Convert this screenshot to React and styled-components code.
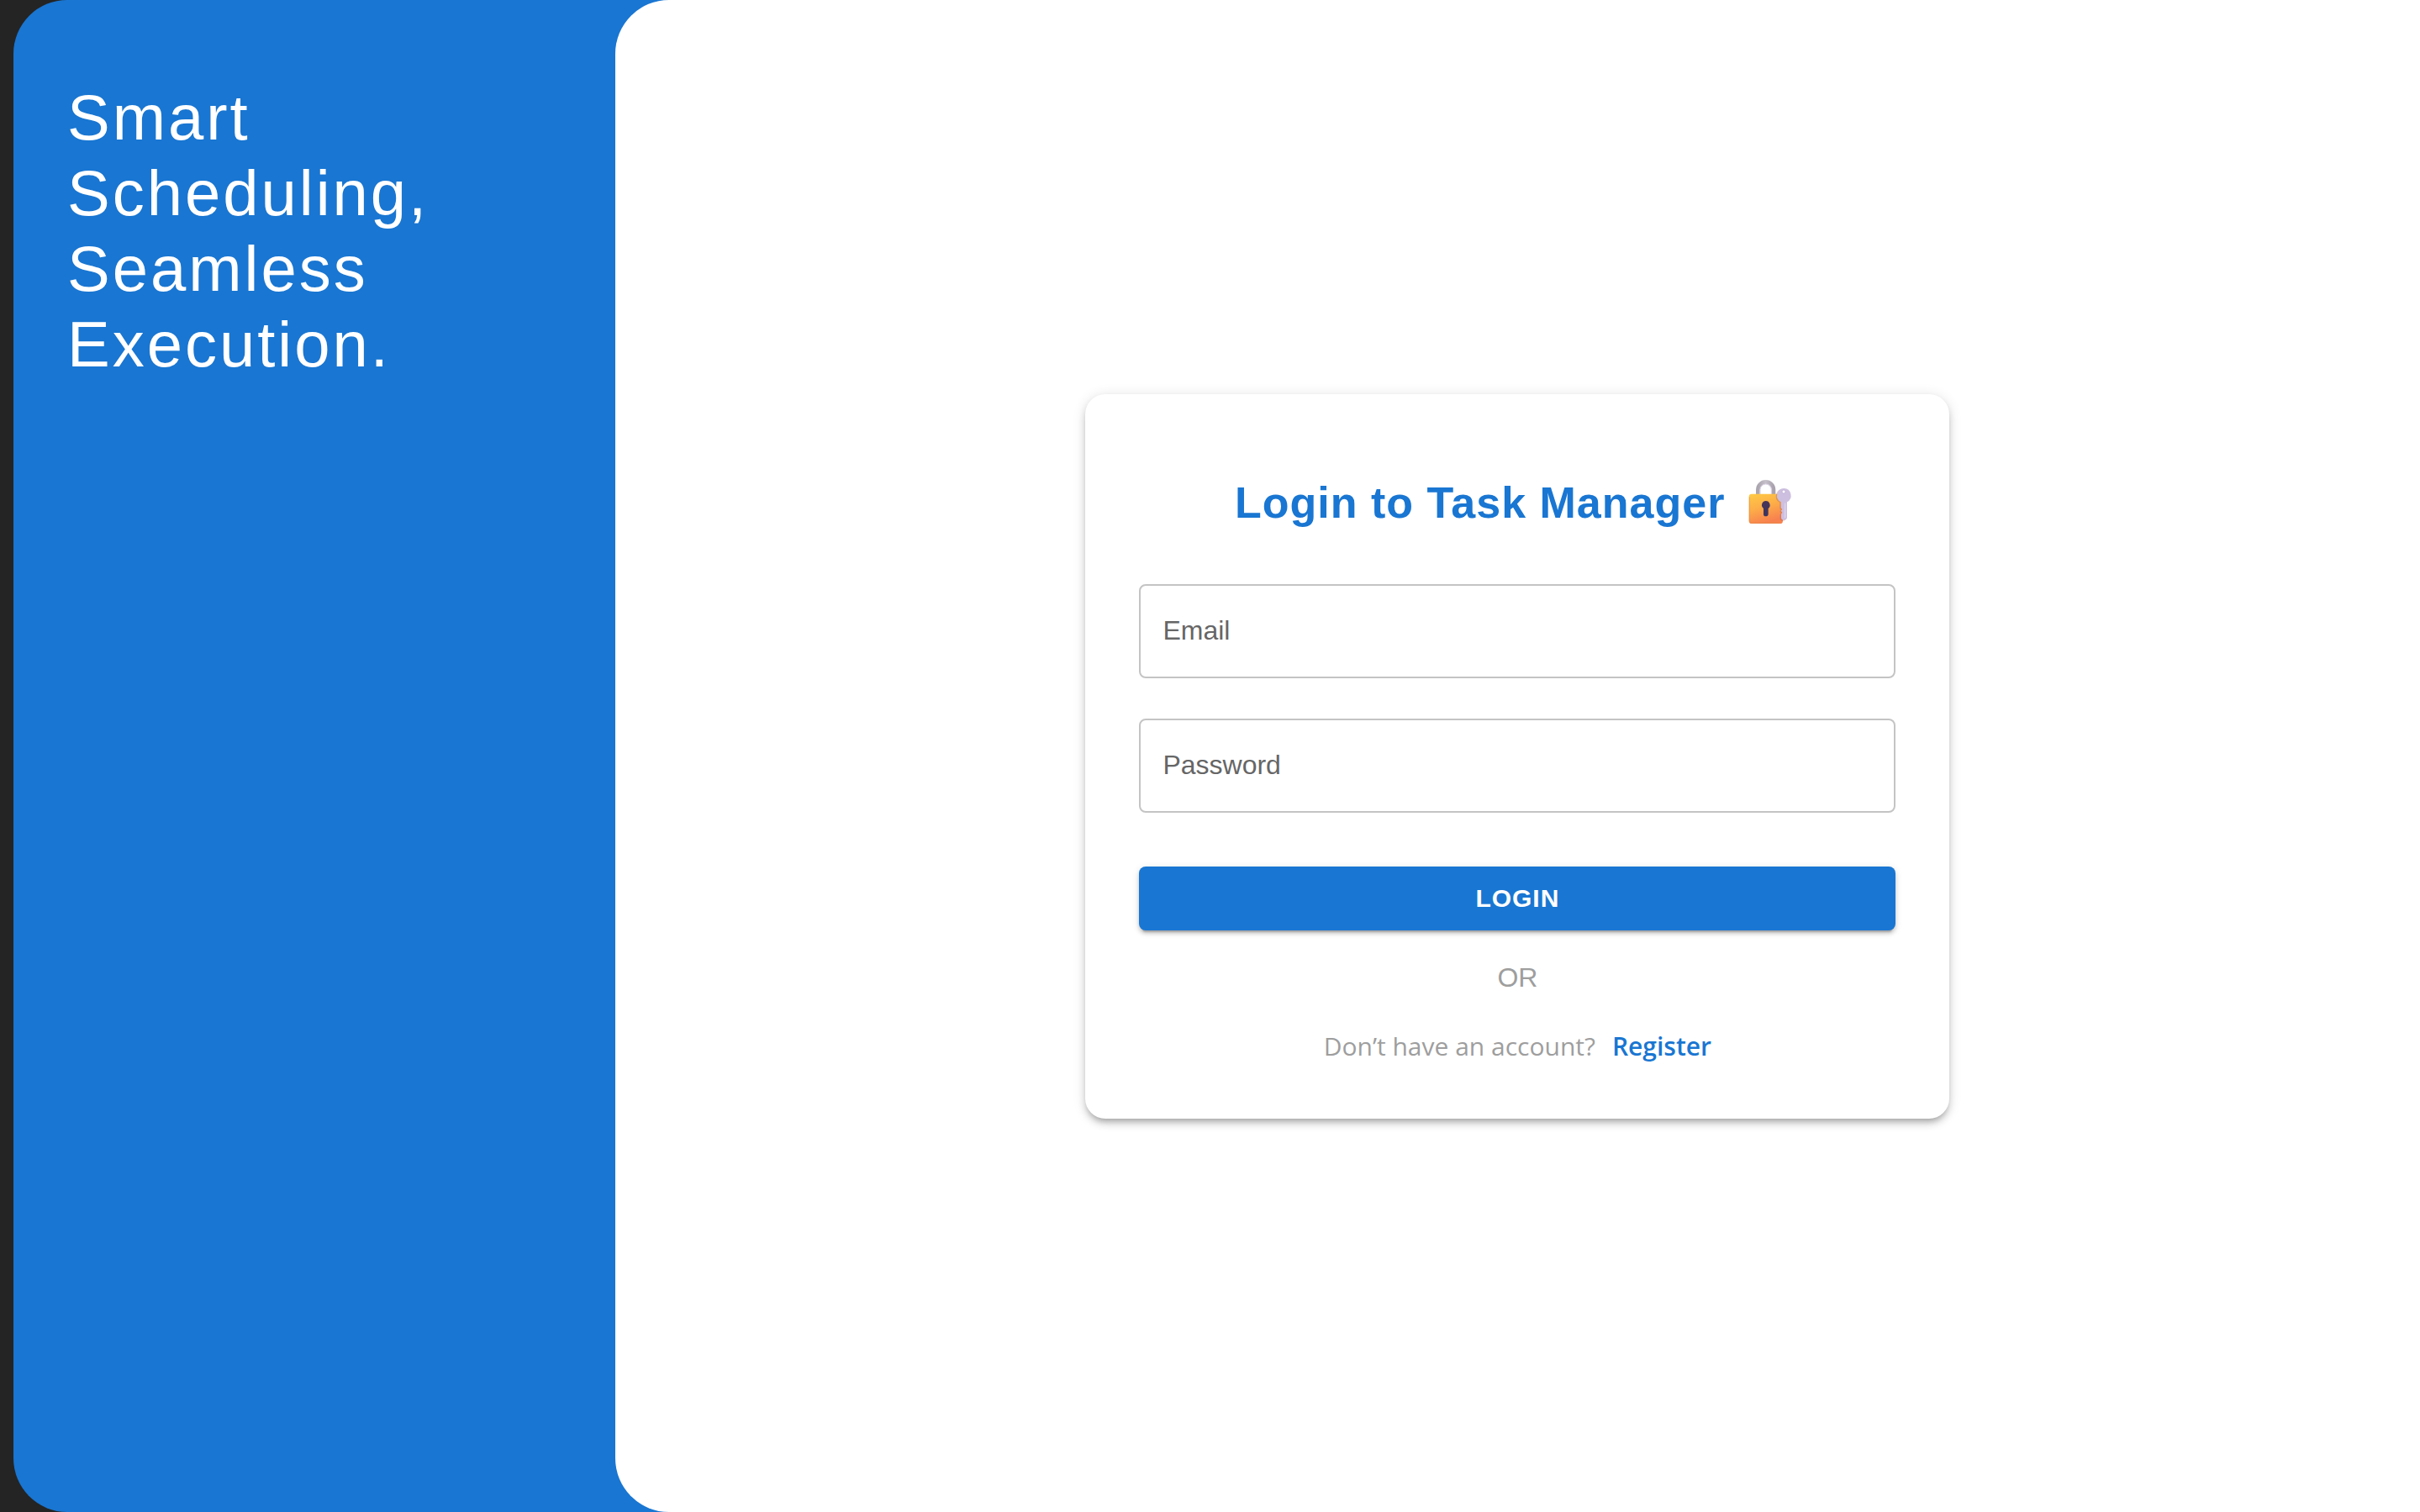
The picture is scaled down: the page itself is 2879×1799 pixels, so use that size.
import React from "react";
import styled, { createGlobalStyle } from "styled-components";

const GlobalStyle = createGlobalStyle`
  *, *::before, *::after {
    box-sizing: border-box;
  }
  body {
    margin: 0;
    background: #242424;
    font-family: "Liberation Sans", Arial, Helvetica, sans-serif;
  }
`;

const Shell = styled.div`
  display: flex;
  min-height: 100vh;
  margin-left: 16px;
  background: #1976d2;
  border-radius: 64px 0 0 64px;
  overflow: hidden;
`;

const Brand = styled.aside`
  flex: 0 0 25%;
  padding: 95px 64px;
`;

const Tagline = styled.h1`
  margin: 0;
  color: #fff;
  font-size: 76px;
  font-weight: 400;
  line-height: 90px;
  letter-spacing: 3px;
`;

const Content = styled.main`
  flex: 1;
  display: flex;
  align-items: center;
  justify-content: center;
  background: #fff;
  border-radius: 64px 0 0 64px;
`;

const Card = styled.form`
  display: flex;
  flex-direction: column;
  width: 100%;
  max-width: 1028px;
  padding: 96px 64px 60px;
  background: #fff;
  border-radius: 24px;
  box-shadow:
    0 6px 6px -4px rgba(0, 0, 0, 0.2),
    0 6px 8px 0 rgba(0, 0, 0, 0.14),
    0 2px 16px 0 rgba(0, 0, 0, 0.12);
`;

const Title = styled.h2`
  margin: 0 0 64px;
  color: #1976d2;
  font-size: 52px;
  font-weight: 700;
  line-height: 66px;
  letter-spacing: 1px;
  text-align: center;
`;

const LockIcon = styled.svg`
  width: 74px;
  height: 54px;
  vertical-align: -8px;
`;

const Fields = styled.div`
  display: flex;
  flex-direction: column;
  gap: 48px;
  margin-bottom: 64px;
`;

const Field = styled.div`
  display: grid;
  align-items: center;

  > * {
    grid-area: 1 / 1;
  }
`;

const FieldLabel = styled.label`
  justify-self: start;
  padding: 0 28px 2px;
  color: #666;
  font-size: 32px;
  line-height: 46px;
  pointer-events: none;
  z-index: 1;

  &:has(+ input:focus),
  &:has(+ input:not(:placeholder-shown)) {
    visibility: hidden;
  }
`;

const FieldInput = styled.input`
  width: 100%;
  height: 112px;
  padding: 0 28px;
  border: 2px solid #c4c4c4;
  border-radius: 8px;
  background: transparent;
  color: rgba(0, 0, 0, 0.87);
  font: inherit;
  font-size: 32px;

  &:focus {
    outline: none;
    border-color: #1976d2;
  }
`;

const SubmitButton = styled.button`
  height: 76px;
  border: 0;
  border-radius: 8px;
  background: #1976d2;
  color: #fff;
  font: inherit;
  font-size: 30px;
  font-weight: 700;
  letter-spacing: 1px;
  text-transform: uppercase;
  cursor: pointer;
  box-shadow:
    0 6px 2px -4px rgba(0, 0, 0, 0.2),
    0 4px 4px 0 rgba(0, 0, 0, 0.14),
    0 2px 10px 0 rgba(0, 0, 0, 0.12);
`;

const Note = styled.p`
  margin: 32px 0 0;
  color: #9e9e9e;
  font-size: 32px;
  line-height: 48px;
  text-align: center;
`;

const SignUp = styled(Note)`
  display: flex;
  justify-content: center;
  gap: 20px;
  font-family: "Segoe UI", "Open Sans", sans-serif;
  font-size: 30px;
  line-height: 52px;
`;

const RegisterLink = styled.a`
  color: #1976d2;
  font-weight: 600;
  text-decoration: none;
`;

function LockWithKey() {
  return (
    <LockIcon viewBox="27 60 222 162" role="img" aria-label="Locked with key">
      <defs>
        <linearGradient id="lockBody" x1="0" y1="0" x2="0.35" y2="1">
          <stop offset="0" stopColor="#ffcb45" />
          <stop offset="0.5" stopColor="#fdae48" />
          <stop offset="1" stopColor="#f8824f" />
        </linearGradient>
        <linearGradient id="shackle" x1="0" y1="0" x2="1" y2="0">
          <stop offset="0" stopColor="#aaa5ae" />
          <stop offset="0.5" stopColor="#c5c0c9" />
          <stop offset="1" stopColor="#a9a2ae" />
        </linearGradient>
        <linearGradient id="keyhole" x1="0" y1="0" x2="0" y2="1">
          <stop offset="0" stopColor="#4b3458" />
          <stop offset="1" stopColor="#3a3560" />
        </linearGradient>
      </defs>
      <path
        d="M97 118V98a28 28 0 0 1 56 0v20"
        fill="none"
        stroke="url(#shackle)"
        strokeWidth="14"
      />
      <path d="M105 114V98a20 20 0 0 1 40 0v16" fill="none" stroke="#d9cde2" strokeWidth="3" />
      <rect x="65" y="113" width="121" height="106" rx="10" fill="url(#lockBody)" />
      <path d="M67 124v84q0 9 9 9h98" fill="none" stroke="#e08a45" strokeWidth="3" opacity="0.6" />
      <path
        d="M125 138a15 15 0 0 0-8 27v20q0 8 8 8t9-8v-20a15 15 0 0 0-9-27z"
        fill="url(#keyhole)"
      />
      <path
        d="M190 93a26 26 0 0 0-12 49v21l4 5-4 5 4 6-3 6v14q0 8 10 8t11-8v-57a26 26 0 0 0-10-49z"
        fill="#a65f55"
        opacity="0.35"
        transform="translate(-3 2)"
      />
      <path
        d="M190 93a26 26 0 0 0-11 49v21l5 5-5 5 5 6-4 6v12q0 9 10 9t11-9v-55a26 26 0 0 0-11-49z"
        fill="#cdbfe0"
      />
      <path d="M194 146v52" stroke="#dfd5ec" strokeWidth="4" />
      <circle cx="189" cy="105" r="6" fill="#fff" stroke="#b3a4c8" strokeWidth="2" />
    </LockIcon>
  );
}

function TextField({ id, label, type }) {
  return (
    <Field>
      <FieldLabel htmlFor={id}>{label}</FieldLabel>
      <FieldInput id={id} name={id} type={type} placeholder=" " />
    </Field>
  );
}

export default function App() {
  return (
    <>
      <GlobalStyle />
      <Shell>
        <Brand>
          <Tagline>Smart Scheduling, Seamless Execution.</Tagline>
        </Brand>
        <Content>
          <Card onSubmit={(event) => event.preventDefault()}>
            <Title>
              Login to Task Manager <LockWithKey />
            </Title>
            <Fields>
              <TextField id="email" label="Email" type="email" />
              <TextField id="password" label="Password" type="password" />
            </Fields>
            <SubmitButton type="submit">Login</SubmitButton>
            <Note>OR</Note>
            <SignUp as="div">
              <span>Don’t have an account?</span>
              <RegisterLink href="#register">Register</RegisterLink>
            </SignUp>
          </Card>
        </Content>
      </Shell>
    </>
  );
}
